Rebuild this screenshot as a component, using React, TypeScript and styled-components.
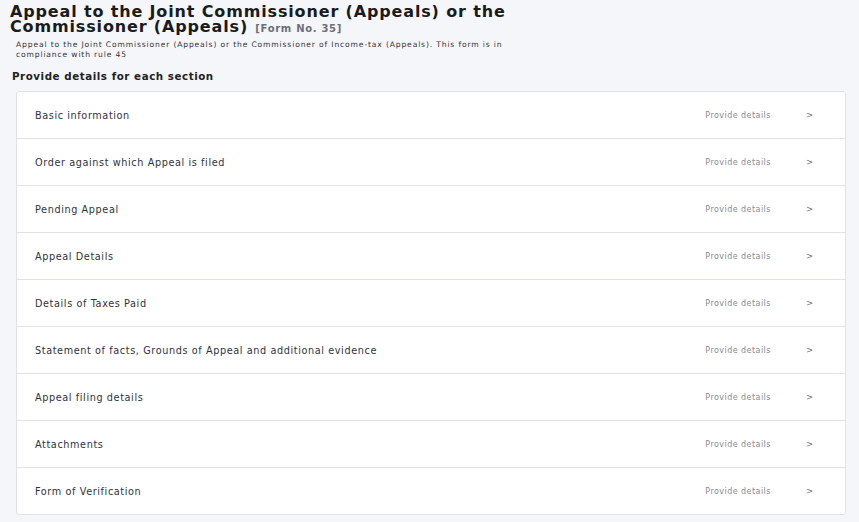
import React from "react";
import styled, { createGlobalStyle } from "styled-components";

const Global = createGlobalStyle`
  html, body { margin: 0; padding: 0; background: #f5f6fa; }
  body { font-family: "DejaVu Sans", "Noto Sans", sans-serif; }
`;

const Page = styled.div`
  width: 859px;
  height: 522px;
  overflow: hidden;
  background: #f5f6fa;
  box-sizing: border-box;
  padding: 4px 13px 0 10px;
`;

const Title = styled.h1`
  margin: 0;
  max-width: 520px;
  font-family: "DejaVu Sans", sans-serif;
  font-weight: 700;
  font-size: 16px;
  line-height: 15px;
  color: #1b1b1b;
  letter-spacing: 0.85px;
`;

const FormNo = styled.span`
  font-size: 10px;
  line-height: 10px;
  font-weight: 700;
  color: #6b6f78;
  letter-spacing: 0.7px;
  margin-left: 3px;
`;

const Desc = styled.p`
  margin: 6px 0 0 6px;
  font-size: 7.6px;
  line-height: 9.5px;
  color: #333;
  letter-spacing: 0.85px;
  max-width: 505px;
`;

const SectionHead = styled.h2`
  margin: 11px 0 9px 2px;
  font-size: 10.3px;
  line-height: 12px;
  font-weight: 600;
  color: #222;
  letter-spacing: 0.55px;
`;

const Card = styled.div`
  margin-left: 6px;
  background: #fff;
  border: 1px solid #e1e1ec;
  border-radius: 3px;
`;

const Row = styled.div`
  display: flex;
  align-items: center;
  height: 46px;
  padding: 0 32px 0 18px;
  border-top: 1px solid #e1e1ec;
  &:first-child { border-top: none; }
`;

const Label = styled.div`
  flex: 1;
  font-size: 9.7px;
  color: #2f3340;
  letter-spacing: 0.6px;
`;

const Status = styled.div`
  font-size: 8px;
  color: #8a8a93;
  letter-spacing: 0.45px;
  margin-right: 35px;
`;

const Chevron = styled.div`
  font-size: 8.5px;
  color: #707070;
`;

const sections = [
  "Basic information",
  "Order against which Appeal is filed",
  "Pending Appeal",
  "Appeal Details",
  "Details of Taxes Paid",
  "Statement of facts, Grounds of Appeal and additional evidence",
  "Appeal filing details",
  "Attachments",
  "Form of Verification",
];

export default function App() {
  return (
    <Page>
      <Global />
      <Title>
        Appeal to the Joint Commissioner (Appeals) or the Commissioner (Appeals)
        <FormNo> [Form No. 35]</FormNo>
      </Title>
      <Desc>
        Appeal to the Joint Commissioner (Appeals) or the Commissioner of Income-tax (Appeals). This form is in
        compliance with rule 45
      </Desc>
      <SectionHead>Provide details for each section</SectionHead>
      <Card>
        {sections.map((s) => (
          <Row key={s}>
            <Label>{s}</Label>
            <Status>Provide details</Status>
            <Chevron>&gt;</Chevron>
          </Row>
        ))}
      </Card>
    </Page>
  );
}
